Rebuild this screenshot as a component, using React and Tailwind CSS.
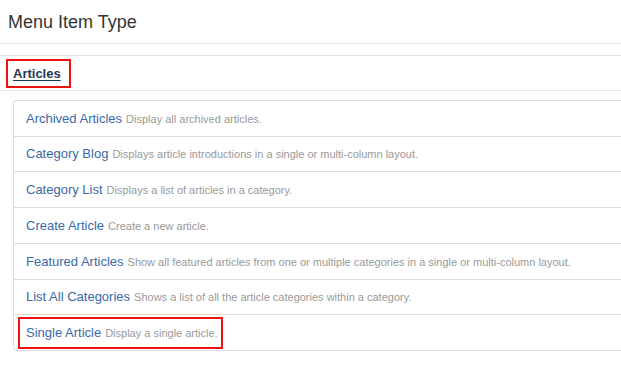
import React from "react";

const items = [
  ["Archived Articles", "Display all archived articles.", "h-[35px]"],
  ["Category Blog", "Displays article introductions in a single or multi-column layout.", "h-[34px]"],
  ["Category List", "Displays a list of articles in a category.", "h-[35px]"],
  ["Create Article", "Create a new article.", "h-[35px]"],
  ["Featured Articles", "Show all featured articles from one or multiple categories in a single or multi-column layout.", "h-[35px]"],
  ["List All Categories", "Shows a list of all the article categories within a category.", "h-[34px]"],
];

export default function App() {
  return (
    <div className="w-[621px] h-[377px] bg-white overflow-hidden font-['Liberation_Sans',Arial,sans-serif]">
      <div className="h-[44px] border-b border-[#e6e6e6] pl-[8px] pt-[12px]">
        <h1 className="text-[18px] leading-[20px] text-[#333333] font-normal">Menu Item Type</h1>
      </div>
      <div className="mt-[11px] border-t border-b border-[#e3e3e3] h-[36px] pt-[3px]">
        <div className="ml-[6px] w-[65px] h-[29px] border-2 border-[#ee1111] flex items-center pl-[5px]">
          <a className="text-[13px] leading-[15px] font-bold text-[#22395c] underline underline-offset-2">Articles</a>
        </div>
      </div>
      <div className="mt-[9px] ml-[13px] mr-[-8px] border-l border-t border-b border-[#dddddd] rounded-l-[4px]">
        {items.map(([t, d, h]) => (
          <div key={t} className={`${h} box-content border-b border-[#dddddd] flex items-center pl-[12px] whitespace-nowrap`}>
            <span className="text-[13px] leading-[18px] text-[#3a69a6]">{t}</span>
            <span className="text-[11px] leading-[18px] text-[#999999] ml-[4px]">{d}</span>
          </div>
        ))}
        <div className="h-[35px] flex items-center whitespace-nowrap">
          <div className="ml-[4px] mt-[0px] h-[32px] border-2 border-[#ee1111] flex items-center pl-[6px] pr-[3px]">
            <span className="text-[13px] leading-[18px] text-[#3a69a6]">Single Article</span>
            <span className="text-[11px] leading-[18px] text-[#999999] ml-[4px]">Display a single article.</span>
          </div>
        </div>
      </div>
    </div>
  );
}
